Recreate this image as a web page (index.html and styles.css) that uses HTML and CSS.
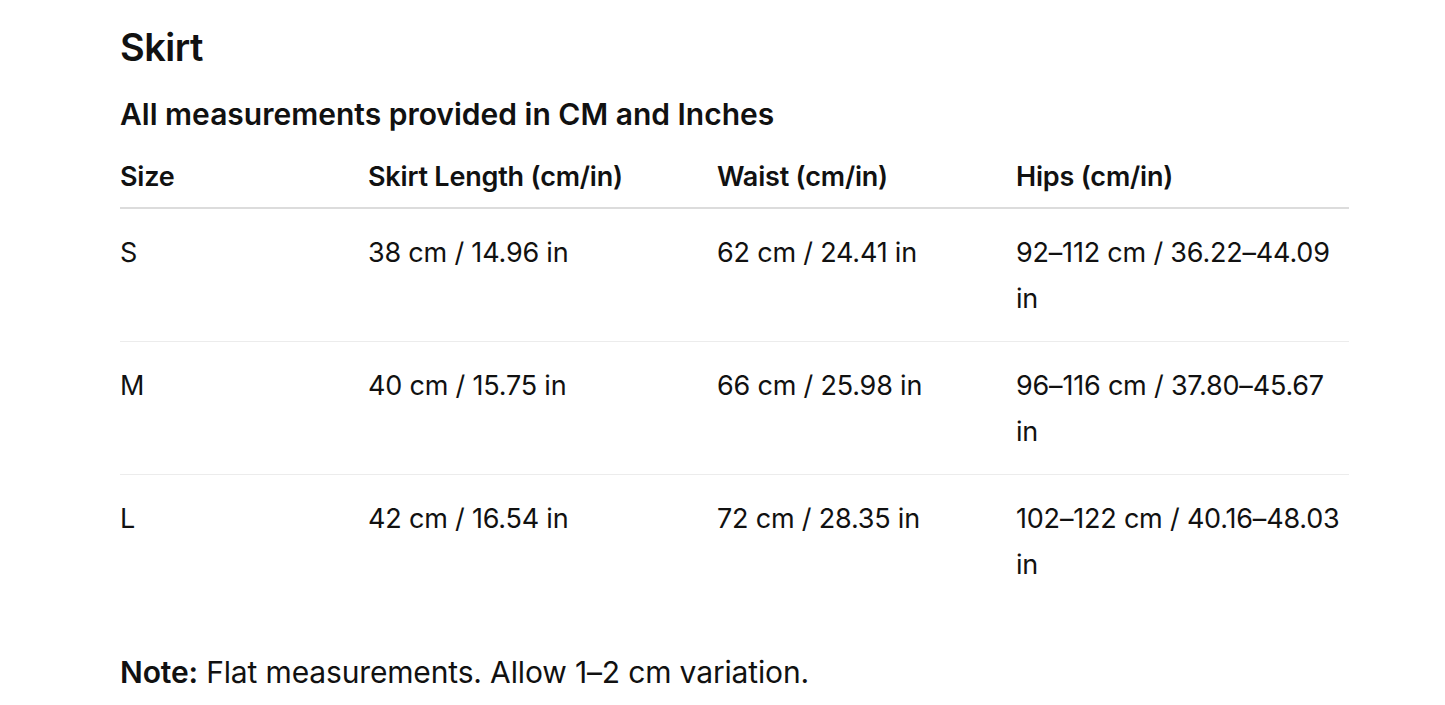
FILE: index.html
```html
<!DOCTYPE html>
<html lang="en">
<head>
<meta charset="utf-8">
<title>Skirt</title>
<link rel="stylesheet" href="styles.css">
</head>
<body>
<main class="page">
  <h1 class="title">Skirt</h1>
  <h2 class="subtitle">All measurements provided in CM and Inches</h2>
  <table class="size-table">
    <thead>
      <tr>
        <th>Size</th>
        <th>Skirt Length (cm/in)</th>
        <th>Waist (cm/in)</th>
        <th>Hips (cm/in)</th>
      </tr>
    </thead>
    <tbody>
      <tr>
        <td>S</td>
        <td>38 cm / 14.96 in</td>
        <td>62 cm / 24.41 in</td>
        <td>92–112 cm / 36.22–44.09 in</td>
      </tr>
      <tr>
        <td>M</td>
        <td>40 cm / 15.75 in</td>
        <td>66 cm / 25.98 in</td>
        <td>96–116 cm / 37.80–45.67 in</td>
      </tr>
      <tr>
        <td>L</td>
        <td>42 cm / 16.54 in</td>
        <td>72 cm / 28.35 in</td>
        <td>102–122 cm / 40.16–48.03 in</td>
      </tr>
    </tbody>
  </table>
  <p class="note"><strong>Note:</strong> Flat measurements. Allow 1–2 cm variation.</p>
</main>
</body>
</html>
```

FILE: styles.css
```css
html, body {
  margin: 0;
  padding: 0;
  background: #fff;
}
body {
  font-family: Inter, "Noto Sans", sans-serif;
  color: #111;
}
.page {
  width: 1229px;
  margin-left: 120px;
  padding-top: 24px;
}
.title {
  margin: 0;
  font-size: 38px;
  font-weight: 600;
  line-height: 46px;
  letter-spacing: -0.5px;
}
.subtitle {
  margin: 21px 0 0;
  font-size: 30px;
  font-weight: 600;
  line-height: 46px;
}
.size-table {
  width: 100%;
  border-collapse: collapse;
  margin-top: 17px;
  font-size: 27px;
  line-height: 46px;
}
.size-table th {
  text-align: left;
  font-weight: 600;
  padding: 0 0 7px;
  border-bottom: 2px solid #dcdcdc;
  letter-spacing: -0.2px;
}
.size-table td {
  padding: 21px 0 19px;
  vertical-align: top;
  border-bottom: 1px solid #ececec;
  letter-spacing: -0.2px;
}
.size-table tbody tr:last-child td {
  border-bottom: none;
}
.size-table th:nth-child(1) { width: 248px; }
.size-table th:nth-child(2) { width: 349px; }
.size-table th:nth-child(3) { width: 299px; }
.note {
  margin: 42px 0 0;
  font-size: 30px;
  line-height: 46px;
  letter-spacing: -0.15px;
}
.note strong {
  font-weight: 600;
}
```
